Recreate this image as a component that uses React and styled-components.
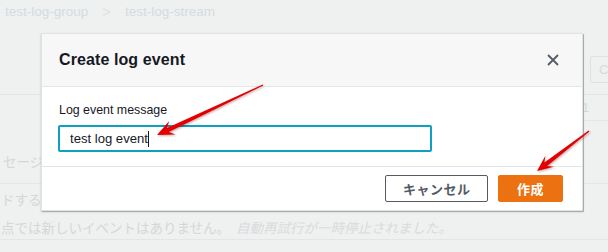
import styled, { createGlobalStyle } from "styled-components";

const GlobalStyle = createGlobalStyle`
    html, body {
        margin: 0;
        padding: 0;
        background: #eff0f0;
        overflow: hidden;
    }
`;

const Page = styled.div`
    position: relative;
    width: 608px;
    height: 252px;
    overflow: hidden;
    font-family: "Liberation Sans", "Noto Sans CJK JP", sans-serif;
`;

// dimmed console page behind the modal
const Backdrop = styled.div`
    display: flex;
    flex-direction: column;
    color: #d4d7d9;
`;

const Crumbs = styled.div`
    display: flex;
    align-items: center;
    gap: 14px;
    height: 22px;
    padding: 0 5px;
    font-size: 13.5px;
    color: #d4dce2;
    span.sep {
        color: #dfe1e3;
        font-size: 15px;
    }
`;

const Toolbar = styled.div`
    display: flex;
    justify-content: flex-end;
    align-items: flex-start;
    height: 73px;
    padding-top: 34px;
    box-sizing: border-box;
    border-bottom: 1px solid #e4e6e6;
`;

const GhostButton = styled.div`
    width: 32px;
    height: 27px;
    margin-right: -14px;
    border: 1px solid #dfe1e1;
    border-radius: 2px;
    box-sizing: border-box;
    padding-left: 8px;
    line-height: 25px;
    font-size: 13px;
    color: #d8dbdc;
`;

const HeadRow = styled.div`
    display: flex;
    justify-content: flex-end;
    height: 26px;
`;

const NumCell = styled.div`
    width: 26px;
    border-bottom: 1px solid #e4e6e6;
    padding-left: 14px;
    line-height: 26px;
    font-size: 13px;
    color: #d5d8d9;
`;

const Row = styled.div`
    height: 63px;
    box-sizing: border-box;
    padding: 30px 0 0 3px;
    border-bottom: 1px solid #e4e6e6;
    font-size: 13.5px;
`;

const Desc = styled.div`
    height: 56px;
    box-sizing: border-box;
    padding: 3px 0 0 1px;
    border-bottom: 1px solid #e4e6e6;
    font-size: 13.5px;
    line-height: 28px;
    white-space: nowrap;
    em {
        margin-left: 6px;
        color: #d9dbdd;
    }
`;

const Modal = styled.div`
    position: absolute;
    left: 41px;
    top: 33px;
    width: 540px;
    display: flex;
    flex-direction: column;
    background: #fff;
    border: 1px solid #e1e3e3;
    border-radius: 1px;
    box-shadow: 1px 1px 0 #a9acad, 0 1px 2px rgba(0, 28, 36, 0.25);
`;

const Header = styled.div`
    display: flex;
    align-items: center;
    justify-content: space-between;
    height: 52px;
    padding: 0 23px 0 17px;
    background: #f7f7f7;
    border-bottom: 1px solid #e4e5e5;
`;

const Title = styled.h2`
    margin: 0;
    font-size: 16px;
    font-weight: 700;
    color: #16191f;
    letter-spacing: 0.1px;
`;

const Close = styled.div`
    display: flex;
    width: 12px;
    height: 12px;
    color: #545b64;
`;

const Body = styled.div`
    display: flex;
    flex-direction: column;
    gap: 6px;
    padding: 15px 17px 14px;
    border-bottom: 1px solid #e4e5e5;
`;

const Label = styled.label`
    font-size: 12.4px;
    color: #16191f;
    line-height: 17px;
`;

const Field = styled.div`
    display: flex;
    align-items: center;
    width: 374px;
    height: 27px;
    box-sizing: border-box;
    margin-left: -1px;
    padding: 0 10px;
    border: 2px solid #0f9fc2;
    border-radius: 2px;
    font-size: 13.1px;
    color: #16191f;
`;

const Caret = styled.span`
    display: inline-block;
    width: 1px;
    height: 16px;
    background: #16191f;
`;

const Footer = styled.div`
    display: flex;
    justify-content: flex-end;
    gap: 10px;
    padding: 8px 19px 8px 17px;
`;

const Button = styled.button`
    height: 27px;
    padding: 0 ${(p) => (p.$primary ? "18px" : "16.5px")};
    border: 1px solid ${(p) => (p.$primary ? "#ec7211" : "#545b64")};
    border-radius: 2px;
    background: ${(p) => (p.$primary ? "#ec7211" : "#fff")};
    color: ${(p) => (p.$primary ? "#fff" : "#545b64")};
    font-family: "Noto Sans CJK JP", sans-serif;
    font-size: 13px;
    font-weight: 700;
    letter-spacing: 0.5px;
`;

const Overlay = styled.svg`
    position: absolute;
    left: 0;
    top: 0;
    pointer-events: none;
    filter: drop-shadow(1px 1px 1px rgba(80, 0, 0, 0.35));
`;

// tapering arrow with swept-back head
const arrowPoints = (x1, y1, x2, y2, head = 17, half = 7.5, tail = 0.6, neck = 2.2) => {
    const len = Math.hypot(x2 - x1, y2 - y1);
    const ux = (x2 - x1) / len;
    const uy = (y2 - y1) / len;
    const nx = -uy;
    const ny = ux;
    const bx = x2 - ux * head;
    const by = y2 - uy * head;
    const jx = x2 - ux * (head - 5);
    const jy = y2 - uy * (head - 5);
    const pts = [
        [x1 + nx * tail, y1 + ny * tail],
        [jx + nx * neck, jy + ny * neck],
        [bx + nx * half, by + ny * half],
        [x2, y2],
        [bx - nx * half, by - ny * half],
        [jx - nx * neck, jy - ny * neck],
        [x1 - nx * tail, y1 - ny * tail],
    ];
    return pts.map((p) => p.map((v) => v.toFixed(1)).join(",")).join(" ");
};

const App = () => {
    return (
        <Page>
            <GlobalStyle />
            <Backdrop>
                <Crumbs>
                    <span>test-log-group</span>
                    <span className="sep">&gt;</span>
                    <span>test-log-stream</span>
                </Crumbs>
                <Toolbar>
                    <GhostButton>C</GhostButton>
                </Toolbar>
                <HeadRow>
                    <NumCell>1</NumCell>
                </HeadRow>
                <Row>セージ</Row>
                <Desc>
                    ドする
                    <br />
                    点では新しいイベントはありません。
                    <em>自動再試行が一時停止されました。</em>
                </Desc>
            </Backdrop>

            <Modal>
                <Header>
                    <Title>Create log event</Title>
                    <Close>
                        <svg width="12" height="12" viewBox="0 0 12 12">
                            <path d="M1 1L11 11M11 1L1 11" stroke="currentColor" strokeWidth="1.8" fill="none" />
                        </svg>
                    </Close>
                </Header>
                <Body>
                    <Label>Log event message</Label>
                    <Field>
                        test log event
                        <Caret />
                    </Field>
                </Body>
                <Footer>
                    <Button>キャンセル</Button>
                    <Button $primary>作成</Button>
                </Footer>
            </Modal>

            <Overlay width="608" height="252">
                <polygon points={arrowPoints(263, 85, 157, 135)} fill="#e40000" />
                <polygon points={arrowPoints(589, 131, 537, 171, 16, 7)} fill="#e40000" />
            </Overlay>
        </Page>
    );
};

export default App;
